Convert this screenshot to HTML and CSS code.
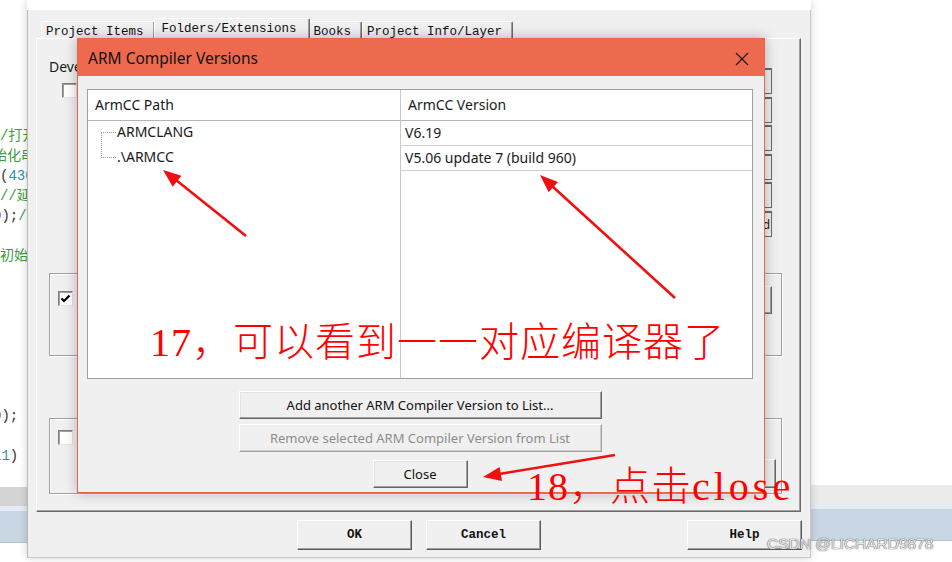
FILE: index.html
```html
<!DOCTYPE html>
<html lang="zh-CN">
<head>
    <meta charset="UTF-8">
    <meta name="viewport" content="width=device-width, initial-scale=1.0">
    <title>ARM Compiler Versions</title>
    <link rel="stylesheet" href="styles.css">
</head>
<body>
    <div class="desktop">
        <!-- editor strip behind the options dialog -->
        <div class="editor">
            <div class="code">
                <div class="ln"><span class="cm">/打开</span></div>
                <div class="ln shift"><span class="cm">始化串</span></div>
                <div class="ln"><span class="pn">(</span><span class="nm">430</span></div>
                <div class="ln"><span class="cm">//延时</span></div>
                <div class="ln shift"><span class="rd">0</span><span class="pn">);</span><span class="cm">/</span></div>
                <div class="ln"></div>
                <div class="ln"><span class="cm">初始化</span></div>
                <div class="ln"></div>
                <div class="ln"></div>
                <div class="ln"></div>
                <div class="ln"></div>
                <div class="ln"></div>
                <div class="ln"></div>
                <div class="ln"></div>
                <div class="ln shift"><span class="rd">0</span><span class="pn">);</span></div>
                <div class="ln"></div>
                <div class="ln shift"><span class="nm">11</span><span class="pn">)</span></div>
            </div>
            <div class="taskbar dark">
                <div class="tb-grey"></div>
                <div class="tb-line"></div>
                <div class="tb-blue"></div>
            </div>
        </div>

        <!-- Options for Target dialog -->
        <div class="options">
            <div class="options-top"></div>
            <div class="tabs">
                <div class="tab">Project Items</div>
                <div class="tab selected">Folders/Extensions</div>
                <div class="tab">Books</div>
                <div class="tab">Project Info/Layer</div>
            </div>
            <div class="tabpage">
                <div class="device-area">
                    <div class="device-left">
                        <div class="label">Development Tools</div>
                        <div class="check-row"><span class="check"></span></div>
                    </div>
                    <div class="side-buttons">
                        <div class="mini-btn">...</div>
                        <div class="mini-btn">...</div>
                        <div class="mini-btn">...</div>
                        <div class="mini-btn">...</div>
                        <div class="mini-btn">...</div>
                        <div class="mini-btn">Add</div>
                    </div>
                </div>
                <div class="groupbox first">
                    <span class="check checked">
                        <svg width="11" height="11" viewBox="0 0 11 11"><path d="M1.5 5.5 L4 8 L9.5 2.5" fill="none" stroke="#000" stroke-width="2.2"/></svg>
                    </span>
                    <div class="group-btn"></div>
                </div>
                <div class="groupbox second">
                    <span class="check"></span>
                    <div class="group-btn low"></div>
                </div>
            </div>
            <div class="buttonbar">
                <div class="btn">OK</div>
                <div class="btn">Cancel</div>
                <div class="btn help">Help</div>
            </div>
        </div>

        <div class="rightside">
            <div class="blank"></div>
            <div class="taskbar">
                <div class="tb-grey"></div>
                <div class="tb-line"></div>
                <div class="tb-blue"></div>
            </div>
        </div>
    </div>

    <!-- ARM Compiler Versions dialog -->
    <div class="cv-dialog">
        <div class="cv-title">
            <span>ARM Compiler Versions</span>
            <svg class="cv-close" width="14" height="14" viewBox="0 0 14 14"><path d="M1 1 L13 13 M13 1 L1 13" stroke="#1a1a1a" stroke-width="1.2"/></svg>
        </div>
        <div class="cv-body">
            <div class="cv-list">
                <div class="col col-path">
                    <div class="col-head">ArmCC Path</div>
                    <div class="tree">
                        <div class="tree-line"></div>
                        <div class="tree-row">ARMCLANG</div>
                        <div class="tree-row">.\ARMCC</div>
                    </div>
                </div>
                <div class="col col-version">
                    <div class="col-head">ArmCC Version</div>
                    <div class="ver-row">V6.19</div>
                    <div class="ver-row">V5.06 update 7 (build 960)</div>
                </div>
            </div>
            <div class="cv-buttons">
                <div class="cv-btn">Add another ARM Compiler Version to List...</div>
                <div class="cv-btn disabled">Remove selected ARM Compiler Version from List</div>
                <div class="cv-btn close">Close</div>
            </div>
        </div>
    </div>

    <!-- annotations -->
    <svg class="arrows" width="952" height="562" viewBox="0 0 952 562">
        <g stroke="#f01010" stroke-width="2.6" fill="none">
            <line x1="246" y1="236" x2="176" y2="180"/>
            <line x1="675" y1="298" x2="552" y2="186"/>
            <line x1="615" y1="455" x2="499" y2="474"/>
        </g>
        <g fill="#f01010">
            <polygon points="163,170 181.5,175.7 172.7,186.7"/>
            <polygon points="540,175 558,181.9 548.6,192.3"/>
            <polygon points="483,477 499.6,467.1 502,480.9"/>
        </g>
    </svg>
    <div class="note note-17">17，可以看到一一对应编译器了</div>
    <div class="note note-18">18，点击<span class="latin">close</span></div>
    <div class="watermark">CSDN @LICHARD9878</div>
</body>
</html>
```

FILE: styles.css
```css
* {
    box-sizing: border-box;
}

body {
    margin: 0;
    width: 952px;
    height: 562px;
    overflow: hidden;
    position: relative;
    background: #fff;
    font-family: "Segoe UI", "Noto Sans", sans-serif;
    color: #1a1a1a;
}

.desktop {
    display: flex;
    height: 562px;
}

/* ---- editor strip ---- */
.editor {
    width: 27px;
    display: flex;
    flex-direction: column;
    overflow: hidden;
}

.code {
    height: 487px;
    padding-top: 126px;
    font-family: "Liberation Mono", "Noto Sans CJK SC", monospace;
    font-size: 14px;
}

.ln {
    height: 20px;
    line-height: 20px;
    white-space: nowrap;
}

.ln.shift {
    margin-left: -7px;
}

.cm { color: #3c9e3c; }
.nm { color: #2b91af; }
.pn { color: #333; }
.rd { color: #8b2252; }

.taskbar {
    display: flex;
    flex-direction: column;
}

.tb-grey {
    height: 19px;
    background: #ebebeb;
}

.taskbar.dark .tb-grey {
    background: #d4d4d4;
}

.tb-line {
    height: 5px;
    background: #e4ecf5;
}

.tb-blue {
    height: 32px;
    background: #c9d6e4;
    border-bottom: 1px solid #b4bfcc;
}

/* ---- options dialog ---- */
.options {
    width: 784px;
    height: 558px;
    background: #f0f0f0;
    border-left: 1px solid #b9b9b9;
    border-right: 1px solid #c8c8c8;
    border-bottom: 1px solid #c8c8c8;
    box-shadow: 0 0 8px rgba(0, 0, 0, 0.18);
    display: flex;
    flex-direction: column;
    position: relative;
    z-index: 1;
}

.options-top {
    height: 10px;
    background: #fff;
    margin: 0 -1px;
}

.tabs {
    display: flex;
    align-items: flex-end;
    height: 28px;
    padding-left: 13px;
    position: relative;
    z-index: 2;
}

.tab {
    height: 17px;
    padding: 2px 10px 0 4px;
    font-family: "Liberation Mono", monospace;
    font-size: 12.5px;
    line-height: 17px;
    color: #111;
    border-top: 1px solid #fff;
    border-left: 1px solid #fff;
    border-right: 1px solid #6b6b6b;
    border-radius: 2px 2px 0 0;
    box-shadow: inset -1px 0 #a0a0a0;
    white-space: nowrap;
}

.tab.selected {
    height: 21px;
    margin: 0 -1px 0 -1px;
    padding: 2px 12px 0 7px;
    line-height: 17px;
    background: #f0f0f0;
    position: relative;
    top: 1px;
}

.tabpage {
    height: 474px;
    margin: 0 9px 0 8px;
    padding: 19px 18px 0 12px;
    border: 1px solid;
    border-color: #fff #696969 #696969 #fff;
    box-shadow: inset -1px -1px #a0a0a0;
    display: flex;
    flex-direction: column;
}

.device-area {
    display: flex;
    justify-content: space-between;
    height: 215px;
}

.label {
    font-size: 14px;
    line-height: 18px;
    white-space: nowrap;
}

.check-row {
    padding: 5px 0 0 13px;
}

.check {
    display: inline-flex;
    align-items: center;
    justify-content: center;
    width: 15px;
    height: 15px;
    background: #fff;
    border: 1px solid;
    border-color: #808080 #e3e3e3 #e3e3e3 #808080;
    box-shadow: inset 1px 1px #a0a0a0;
}

.side-buttons {
    display: flex;
    flex-direction: column;
    gap: 2.6px;
    padding-top: 10px;
    margin-right: 10px;
}

.mini-btn {
    width: 26px;
    height: 26px;
    font-size: 12px;
    line-height: 24px;
    text-align: center;
    border: 1px solid;
    border-color: #fff #6b6b6b #6b6b6b #fff;
    border-top: 2px solid #6b6b6b;
}

.groupbox {
    display: flex;
    align-items: flex-start;
    justify-content: space-between;
    border: 1px solid #a0a0a0;
    box-shadow: 1px 1px #fff, inset 1px 1px #fff;
    padding: 0 9px 0 8px;
}

.groupbox.first {
    height: 83px;
    padding-top: 17px;
}

.groupbox.second {
    height: 76px;
    margin-top: 62px;
    padding-top: 11px;
}

.group-btn {
    width: 30px;
    height: 28px;
    margin-top: -5px;
    border: 1px solid;
    border-color: #fff #6b6b6b #6b6b6b #fff;
    box-shadow: inset -1px -1px #a0a0a0;
}

.group-btn.low {
    margin: 29px -4px 0 0;
    height: 29px;
}

.buttonbar {
    display: flex;
    gap: 14px;
    padding: 8px 8px 0 269px;
}

.btn {
    width: 115px;
    height: 30px;
    font-family: "Liberation Mono", monospace;
    font-size: 12.5px;
    font-weight: bold;
    line-height: 28px;
    text-align: center;
    color: #111;
    border: 1px solid;
    border-color: #fff #5a5a5a #5a5a5a #fff;
    box-shadow: inset -1px -1px #a0a0a0;
}

.btn.help {
    margin-left: auto;
}

.rightside {
    flex: 1;
    display: flex;
    flex-direction: column;
}

.rightside .blank {
    height: 485px;
}

/* ---- ARM Compiler Versions dialog ---- */
.cv-dialog {
    position: absolute;
    left: 77px;
    top: 38px;
    width: 688px;
    height: 455px;
    background: #f0f0f0;
    border: 1px solid #e8664c;
    box-shadow: 0 0 12px rgba(0, 0, 0, 0.28);
    z-index: 5;
}

.cv-title {
    height: 37px;
    background: #ee6a4f;
    display: flex;
    align-items: center;
    justify-content: space-between;
    padding: 0 15px 0 10px;
    font-size: 15.5px;
    color: #111;
}

.cv-close {
    margin-top: 2px;
}

.cv-body {
    padding: 13px 11px 0 9px;
}

.cv-list {
    display: flex;
    height: 290px;
    background: #fff;
    border: 1px solid #a0a0a0;
}

.col-path {
    width: 313px;
    border-right: 1px solid #c8c8c8;
}

.col-version {
    flex: 1;
}

.col-head {
    height: 31px;
    line-height: 30px;
    padding-left: 7px;
    font-size: 14px;
    border-bottom: 1px solid #b4b4b4;
}

.tree {
    position: relative;
    padding-left: 29px;
}

.tree-line {
    position: absolute;
    left: 13px;
    top: 11px;
    width: 15px;
    height: 26px;
    border-left: 1px dotted #9a9a9a;
}

.tree-row {
    height: 25px;
    line-height: 22px;
    font-size: 14px;
    position: relative;
}

.tree-row::before {
    content: "";
    position: absolute;
    left: -16px;
    top: 11px;
    width: 15px;
    border-top: 1px dotted #9a9a9a;
}

.ver-row {
    height: 25px;
    line-height: 23px;
    padding-left: 4px;
    font-size: 14px;
    border-bottom: 1px solid #d0d0d0;
}

.cv-buttons {
    display: flex;
    flex-direction: column;
    align-items: center;
    padding-top: 12px;
}

.cv-btn {
    width: 363px;
    height: 28px;
    line-height: 26px;
    text-align: center;
    font-size: 13px;
    color: #111;
    background: #f0f0f0;
    border: 1px solid;
    border-color: #fff #646464 #646464 #fff;
    box-shadow: inset -1px -1px #a0a0a0, inset 1px 1px #e3e3e3;
    white-space: nowrap;
}

.cv-btn.disabled {
    margin-top: 5px;
    color: #8d8d8d;
    border-color: #fff #a0a0a0 #a0a0a0 #fff;
    box-shadow: inset -1px -1px #cfcfcf;
}

.cv-btn.close {
    width: 95px;
    margin-top: 8px;
}

/* ---- annotations ---- */
.arrows {
    position: absolute;
    left: 0;
    top: 0;
    z-index: 8;
    pointer-events: none;
}

.note {
    position: absolute;
    z-index: 9;
    color: #ff0000;
    font-family: "Liberation Serif", "Noto Sans CJK SC", serif;
    font-size: 40px;
    font-weight: 300;
    line-height: 46px;
    letter-spacing: 1px;
    white-space: nowrap;
}

.note-17 {
    left: 150px;
    top: 320px;
}

.note-18 {
    left: 527px;
    top: 464px;
}

.note .latin {
    letter-spacing: 4px;
}

.watermark {
    position: absolute;
    left: 767px;
    top: 535px;
    z-index: 9;
    font-family: "Liberation Sans", sans-serif;
    font-size: 15.5px;
    color: rgba(255, 255, 255, 0.85);
    text-shadow: 0 0 1px #555, 0 0 1px #555;
    white-space: nowrap;
}
```
